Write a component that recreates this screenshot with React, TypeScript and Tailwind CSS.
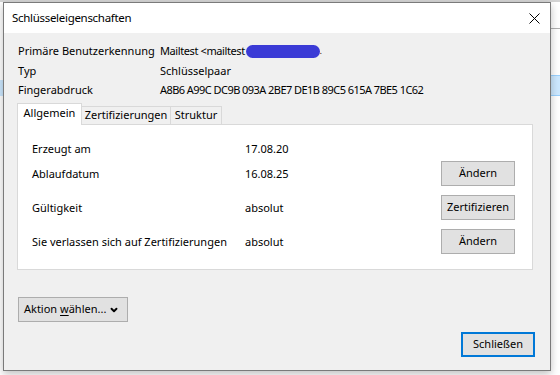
import { ChevronDown } from "lucide-react";

const font = { fontFamily: '"Noto Sans", "Open Sans", sans-serif' };

function Btn({ children, primary = false }: { children: React.ReactNode; primary?: boolean }) {
  return (
    <button
      type="button"
      className={
        "flex h-[25px] w-[74px] items-center justify-center whitespace-nowrap bg-[#e1e1e1] text-[11px] text-black " +
        (primary ? "border-2 border-[#0078d7]" : "border border-[#adadad]")
      }
    >
      {children}
    </button>
  );
}

function InfoRow({ label, children, h }: { label: string; children: React.ReactNode; h: string }) {
  return (
    <div className={"flex items-center whitespace-nowrap " + h}>
      <span className="w-[142px] shrink-0">{label}</span>
      <span className="flex items-center">{children}</span>
    </div>
  );
}

function DetailRow({
  label,
  value,
  action,
  className = "",
}: {
  label: string;
  value: string;
  action?: string;
  className?: string;
}) {
  return (
    <div className={"flex h-[25px] items-center whitespace-nowrap " + className}>
      <span className="w-[213px] shrink-0 pt-px">{label}</span>
      <span className="flex-1 pt-px">{value}</span>
      {action ? <Btn>{action}</Btn> : null}
    </div>
  );
}

export default function App() {
  return (
    <div className="relative h-[375px] w-[560px] overflow-hidden bg-white" style={font}>
      {/* window behind the dialog */}
      <div className="absolute left-0 top-0 h-[2px] w-full bg-[#d4d4d4]" />
      <div className="absolute left-0 top-[80px] h-[16px] w-[3px] bg-[#cce8ff]" />
      <div className="absolute right-0 top-[28px] h-px w-[10px] bg-[#b0b0b0]" />
      <div className="absolute right-0 top-[75px] h-[21px] w-[10px] border-y border-[#99d1ff] bg-[#cce8ff]" />

      <div className="relative ml-[3px] mt-[2px] flex h-[369px] w-[548px] flex-col border border-[#7a7a7a] bg-[#f0f0f0] text-[11px] text-black shadow-[0_3px_8px_rgba(0,0,0,0.25)]">
        <div className="flex h-[30px] items-center justify-between bg-white pl-[8px] pr-[9px]">
          <span className="text-[11.5px] tracking-[-0.3px]">Schlüsseleigenschaften</span>
          <svg width="11" height="11" viewBox="0 0 11 11" className="mr-[1px]">
            <path d="M0.5 0.5 L10.5 10.5 M10.5 0.5 L0.5 10.5" stroke="#000" strokeWidth="1" />
          </svg>
        </div>

        <div className="flex flex-1 flex-col pt-[8px]">
          <div className="flex flex-col pl-[14px]">
            <InfoRow label="Primäre Benutzerkennung" h="h-[20px]">
              <span className="tracking-[-0.4px]">Mailtest &lt;mailtest</span>
              <span className="ml-[1px] inline-block h-[13px] w-[74px] rounded-full bg-[#3b3bd6] blur-[0.6px]" />
              <span className="text-[8px] leading-none">.</span>
            </InfoRow>
            <InfoRow label="Typ" h="h-[20px]">
              Schlüsselpaar
            </InfoRow>
            <InfoRow label="Fingerabdruck" h="h-[18px]">
              <span className="tracking-[-0.55px]">
                A8B6 A99C DC9B 093A 2BE7 DE1B 89C5 615A 7BE5 1C62
              </span>
            </InfoRow>
          </div>

          <div className="ml-[13px] mt-[4px] flex h-[21px] items-end whitespace-nowrap">
            <div className="relative z-10 -mb-px flex h-[22px] w-[65px] items-center justify-center border border-b-0 border-[#d9d9d9] bg-white pb-[2px]">
              Allgemein
            </div>
            <div className="flex h-[18px] w-[89px] items-center justify-center border border-b-0 border-l-0 border-[#d9d9d9] bg-[#f0f0f0]">
              Zertifizierungen
            </div>
            <div className="flex h-[18px] w-[51px] items-center justify-center border border-b-0 border-l-0 border-[#d9d9d9] bg-[#f0f0f0]">
              Struktur
            </div>
          </div>

          <div className="ml-[13px] flex h-[146px] w-[516px] flex-col border border-[#d9d9d9] bg-white pb-[15px] pl-[14px] pr-[17px] pt-[11px]">
            <DetailRow label="Erzeugt am" value="17.08.20" />
            <DetailRow label="Ablaufdatum" value="16.08.25" action="Ändern" />
            <DetailRow className="mt-[9px]" label="Gültigkeit" value="absolut" action="Zertifizieren" />
            <DetailRow
              className="mt-[9px]"
              label="Sie verlassen sich auf Zertifizierungen"
              value="absolut"
              action="Ändern"
            />
          </div>

          <div className="ml-[14px] mt-[27px]">
            <button
              type="button"
              className="flex h-[25px] w-[110px] items-center gap-[3px] whitespace-nowrap border border-[#adadad] bg-[#e1e1e1] pl-[5px] text-[11px]"
            >
              <span>
                Aktion <span className="underline underline-offset-2">w</span>ählen...
              </span>
              <ChevronDown className="size-[10px]" strokeWidth={4.5} />
            </button>
          </div>

          <div className="mr-[15px] mt-[10px] flex justify-end">
            <Btn primary>Schließen</Btn>
          </div>
        </div>
      </div>
    </div>
  );
}
